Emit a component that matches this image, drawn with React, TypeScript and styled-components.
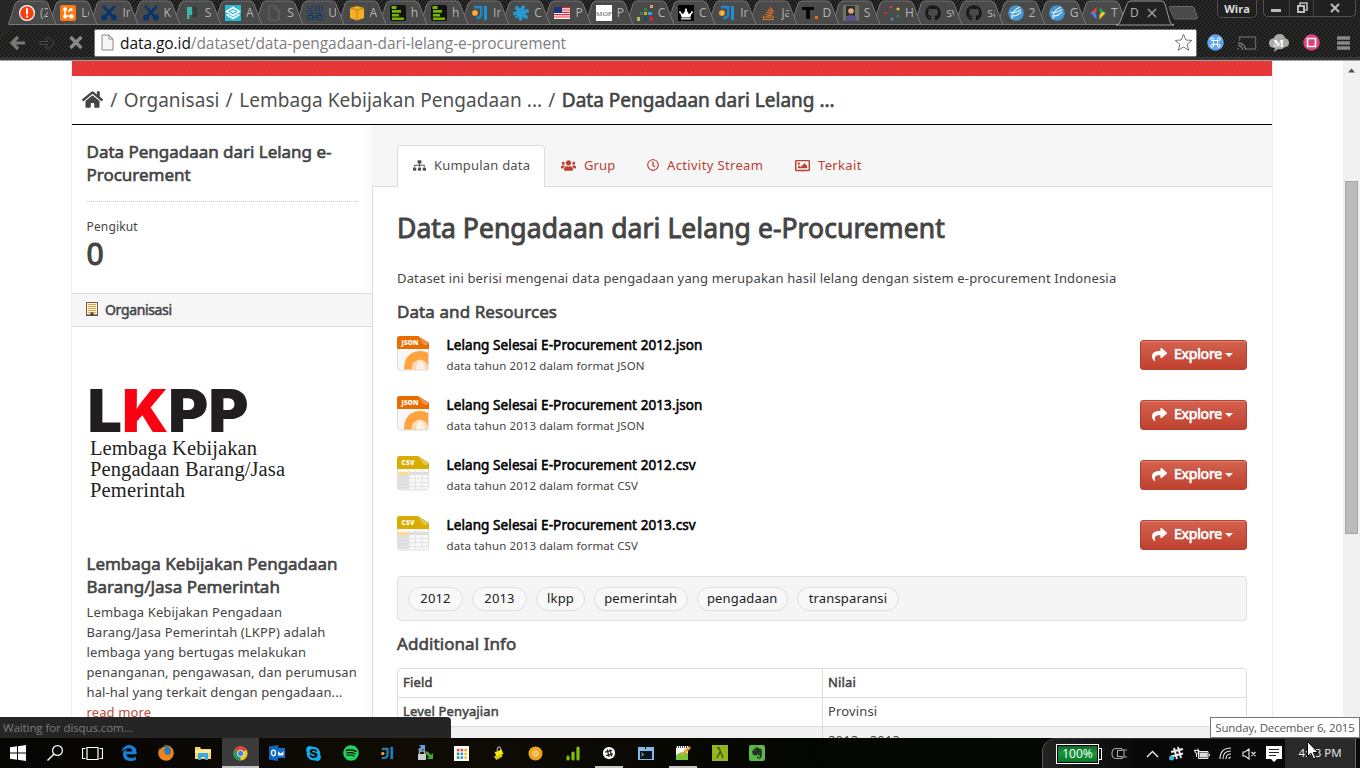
import React from "react";
import styled, { createGlobalStyle } from "styled-components";
import {
  FaHome, FaSitemap, FaUsers, FaRegClock, FaRegImage, FaShare, FaGithub, FaStackOverflow,
  FaFirefox, FaSkype, FaSpotify, FaEvernote, FaCrown,
} from "react-icons/fa";

const Global = createGlobalStyle`
  * { box-sizing: border-box; }
  body { margin: 0; overflow: hidden; background: #fff; font-family: "Noto Sans", sans-serif; color: #444; }
  h1, h2, h3, p { margin: 0; }
  svg { display: block; flex: none; }
`;

const Screen = styled.div`
  width: 1360px; height: 768px; display: flex; flex-direction: column; overflow: hidden; position: relative;
`;

/* ---------- browser frame ---------- */
const Chrome = styled.header`
  height: 61px; flex: none; display: flex; flex-direction: column; border-bottom: 1px solid #a2a2a2;
  background: repeating-linear-gradient(135deg, #191919 0 1.4px, #2b2b29 1.4px 2.83px);
`;
const TabStrip = styled.div`
  height: 25px; display: flex; padding-left: 8px; flex: none;
`;
const TabBox = styled.div<{ $last?: boolean; $z: number }>`
  width: ${p => (p.$last ? 55 : 41.19)}px; height: 25px; flex: none; position: relative; z-index: ${p => p.$z};
  display: flex; align-items: center; padding: 1px 0 0 ${p => (p.$last ? 10 : 11)}px; gap: 5px;
`;
const TabShape = styled.svg`
  position: absolute; left: 0; top: 0; overflow: visible;
`;
const Fav = styled.span`
  width: 16px; height: 16px; position: relative; flex: none; display: flex; align-items: center; justify-content: center;
`;
const TabText = styled.span<{ $wide?: boolean }>`
  position: relative; width: ${p => (p.$wide ? 10 : 8)}px; overflow: hidden; white-space: nowrap;
  font: 12px/18px "Open Sans", sans-serif; color: #b4b4b4;
`;
const CloseMark = styled.svg`
  position: relative; margin-left: 2px;
`;
const NewTab = styled.svg`
  margin: 5px 0 0 -8px; position: relative; z-index: 60;
`;
const WindowControls = styled.div`
  display: flex; margin-left: auto; gap: 6px; padding-right: 4px;
`;
const UserBadge = styled.span`
  width: 40px; height: 18px; border: 1px solid #505050; border-top: 0; border-radius: 0 0 5px 5px;
  font: 700 11px/18px "Open Sans", sans-serif; color: #ddd; text-align: center; background: #202020;
`;
const WindowButtons = styled.div`
  width: 93px; height: 17px; display: flex; border: 1px solid #505050; border-top: 0; border-radius: 0 0 5px 5px; background: #202020;
`;
const WindowButton = styled.span<{ $w: number; $drop?: number }>`
  width: ${p => p.$w}px; display: flex; align-items: center; justify-content: center; border-left: 1px solid #454545;
  padding-top: ${p => p.$drop ?? 0}px;
  &:first-child { border-left: 0; }
`;
const Toolbar = styled.div`
  height: 32px; margin-top: 3px; display: flex; align-items: center;
`;
const NavButtons = styled.div`
  width: 94px; display: flex; gap: 13px; padding-left: 9px; align-items: center;
`;
const Omnibox = styled.div`
  width: 1103px; height: 28px; background: #fff; border: 1px solid #777; border-radius: 2px; display: flex; align-items: center; padding: 0 3px 0 6px;
  font: 15.5px/26px "Open Sans", sans-serif; color: #7e7e7e; letter-spacing: -0.07px;
  b { font-weight: 400; color: #111; }
`;
const Url = styled.span`
  margin: 0 auto 0 6px;
`;
const Extensions = styled.div`
  display: flex; align-items: center; padding-left: 2px;
`;
const ExtensionSlot = styled.span`
  width: 32.1px; display: flex; justify-content: center;
`;
const ToolbarEdge = styled.div`
  height: 3px; margin-top: auto; background: #353535;
`;

const Glyph = ({ children, s = 16 }: { children: React.ReactNode; s?: number }) => (
  <svg width={s} height={s} viewBox="0 0 16 16">{children}</svg>
);
const Scissors = () => (
  <Glyph><g fill="none" stroke="#08356b" strokeWidth="2.8"><path d="M2 1q5 5 9 10M14 1Q9 6 5 11" /><circle cx="3.2" cy="12.5" r="1.7" /><circle cx="12.8" cy="12.5" r="1.7" /></g></Glyph>
);
const Bars = () => (
  <Glyph><rect width="16" height="16" rx="2" fill="#111" /><path fill="#79b800" d="M1.5 1h5v3h-5zM2 5h9v2.8H2zM2 9h7v2.6H2zM2 12.6h12V15H2z" /></Glyph>
);
const JI = () => (
  <Glyph><path d="M2 2.200h7.200V9q0 4-5 4" fill="none" stroke="#2086bd" strokeWidth="2.700" /><circle cx="3" cy="8" r="3" fill="#f49b20" /><circle cx="3" cy="8" r="1.200" fill="#ffd28a" /><path d="M12 1h3v14h-3z" fill="#1f8fd0" /></Glyph>
);
const Globe = () => (
  <Glyph><circle cx="8" cy="8" r="7.8" fill="#4597d0" /><path d="M2 7q5 2 11-2.500M5 11q4 0 8-4M4 14Q3 6 12 2" stroke="#d9effb" strokeWidth="1.300" fill="none" /></Glyph>
);
const Splat = () => (
  <Glyph><g fill="#269bd2"><circle cx="8" cy="8" r="5" /><circle cx="4" cy="3" r="2" /><circle cx="10" cy="2.300" r="2" /><circle cx="14" cy="6" r="2" /><circle cx="13" cy="12" r="2" /><circle cx="7.500" cy="13.800" r="1.900" /><circle cx="2" cy="8.500" r="1.900" /><circle cx="3.500" cy="12" r="1.300" /></g></Glyph>
);
const PageGlyph = ({ color }: { color: string }) => (
  <Glyph><path d="M3 .8h6l4 4v10.4H3zM9 1v4h4" fill="none" stroke={color} /></Glyph>
);

const tabs: { t: string; i: React.ReactNode }[] = [
  { t: "(2", i: <Glyph><circle cx="8" cy="8" r="7.4" fill="#f9400c" stroke="#fff" strokeWidth="1.2" /><path d="M7 3.2h2v6H7zM7 10.6h2v2H7z" fill="#fff" /></Glyph> },
  { t: "Lo", i: <Glyph><rect width="16" height="16" rx="2" fill="#ff7a12" /><path d="M5 4v7h7M9 5h3M9 5v2" fill="none" stroke="#fff" strokeWidth="1.6" /><g fill="#fff"><circle cx="5" cy="4.3" r="2" /><circle cx="5" cy="11.5" r="2" /><circle cx="11.5" cy="11.5" r="2.2" /><circle cx="11" cy="4.6" r="1.6" /></g></Glyph> },
  { t: "Ir", i: <Scissors /> },
  { t: "K", i: <Scissors /> },
  { t: "S", i: <Glyph><path d="M3 2h5v8H5.500v4H3z" fill="#3cb8a8" /><path d="M9 2h4v10H8v-2h2V5H9z" fill="#353b3b" /></Glyph> },
  { t: "A", i: <Glyph><rect width="16" height="16" fill="#2cb9d4" /><path d="M1.5 6.5L8 2.5l6.500 4L8 10.500zM1.500 9.500L8 13.500l6.500-4" fill="none" stroke="#fff" strokeWidth="1.700" /><path d="M5 6.500l3-1.500 3 1.500-3 1.500z" fill="#fff" /></Glyph> },
  { t: "S", i: <PageGlyph color="#666" /> },
  { t: "U", i: <Glyph><g fill="none" stroke="#0b3974" strokeWidth="1.200"><path d="M1 10.500h5v4H1zM10 10.500h5v4h-5zM6 12.500h4M3 8v2M13 8v2" /><path d="M0 1l6 6M6 1L0 7M8 3h8M8 5h8M8 1h8M3 8h10" strokeDasharray="2 1" /></g></Glyph> },
  { t: "A", i: <Glyph><path d="M1 3l7-2 7 2v10l-7 2.500L1 13z" fill="#f2ae24" /><path d="M1 3l7 2 7-2M8 5v10" stroke="#c37b0b" fill="none" /></Glyph> },
  { t: "h", i: <Bars /> },
  { t: "h", i: <Bars /> },
  { t: "Ir", i: <JI /> },
  { t: "C", i: <Splat /> },
  { t: "P", i: <Glyph><path fill="#fff" d="M0 2h16v12H0z" /><path d="M0 2.700h16M0 5h16M0 7.300h16M0 9.600h16M0 12h16" stroke="#e3243b" strokeWidth="1.200" /><path fill="#1f3479" d="M0 2h8v6H0z" /></Glyph> },
  { t: "P", i: <Glyph><path fill="#fff" d="M0 0h16v16H0z" /><text x="0" y="10.500" fontFamily="Liberation Serif" fontSize="7" textLength="16" fill="#555">MOF</text></Glyph> },
  { t: "C", i: <Glyph><path fill="#e0a083" d="M13 0h3v3h-3z" /><path fill="#29864b" d="M7 3h3v3H7zM3 7h3v3H3z" /><path fill="#f09a35" d="M7 7h3v3H7z" /><path fill="#27a3db" d="M11 7h4v3h-4z" /><path fill="#b6b75e" d="M0 12h3v4H0z" /><path fill="#0e4b82" d="M7 12h3v4H7z" /><path fill="#df2525" d="M13 12h3v4h-3z" /></Glyph> },
  { t: "C", i: <Glyph><path d="M0 0h16v16H0z" /><g transform="translate(1 2)"><FaCrown size={14} color="#fff" /></g></Glyph> },
  { t: "Ir", i: <JI /> },
  { t: "ja", i: <FaStackOverflow size={15} color="#e87922" /> },
  { t: "D", i: <Glyph><path d="M0 2h12v3H8v9H4V5H0z" fill="#080808" /><path d="M13 11h3v3h-3z" fill="#ff6a00" /></Glyph> },
  { t: "S", i: <Glyph><path d="M0 0h16v16H0z" fill="#6e7463" /><path d="M3 1h9v10H3z" fill="#352a24" /><circle cx="8" cy="6" r="2.800" fill="#dba88d" /><path d="M2 16q0-6 6-6t6 6" fill="#5c518c" /></Glyph> },
  { t: "H", i: <Glyph><g fill="#d84030"><circle cx="7" cy="2" r="1.300" /><circle cx="1.500" cy="8" r="1.300" /></g><circle cx="14" cy="4" r="1.600" fill="#f2c321" /><circle cx="8" cy="14" r="1.500" fill="#2697df" /><circle cx="14" cy="11" r="1.200" fill="#329b51" /><path d="M7 3l-5 5 6 5 6-8" fill="none" stroke="#6b4b4b" strokeDasharray="1 1" /></Glyph> },
  { t: "sv", i: <FaGithub size={16} color="#181818" /> },
  { t: "sa", i: <FaGithub size={16} color="#181818" /> },
  { t: "2", i: <Globe /> },
  { t: "G", i: <Globe /> },
  { t: "T", i: <Glyph><path d="M6.500 2v5L4 9 .5 8z" fill="#e84436" /><path d="M.5 8L4 7l2.500 3v4.500z" fill="#4385f5" /><path d="M9.500 2v5L12 9l3.500-1z" fill="#18a15f" /><path d="M15.500 8L12 7l-2.500 3v4.500z" fill="#ffca28" /></Glyph> },
];

const BrowserChrome = () => (
  <Chrome>
    <TabStrip>
      {tabs.map((tab, n) => (
        <TabBox key={n} $z={40 - n}>
          <TabShape width="49" height="25">
            <path d="M0.500 24.500L7 4q1.500-3 4-3h25q3 0 4 3l8 20.500z" fill="#4a4a4a" stroke="#777" />
          </TabShape>
          <Fav>{tab.i}</Fav>
          <TabText>{tab.t}</TabText>
        </TabBox>
      ))}
      <TabBox $last $z={50}>
        <TabShape width="55" height="26">
          <path d="M-4 25h1q2 0 3-3L7 4q1-3 4-3h30q3 0 4 3l5 18q1 3 4 3z" fill="#222" stroke="#9c9c9c" />
        </TabShape>
        <TabText $wide>D</TabText>
        <CloseMark width="10" height="10"><path d="M1 1l8 8M9 1L1 9" stroke="#999" strokeWidth="1.600" /></CloseMark>
      </TabBox>
      <NewTab width="32" height="16"><path d="M3 1.500h22q2 0 2.500 2l3 9.500q0 1-1 1H9q-2 0-2.500-1.500l-4-9q-.5-2 .5-2z" fill="#4a4a4a" stroke="#666" /></NewTab>
      <WindowControls>
        <UserBadge>Wira</UserBadge>
        <WindowButtons>
          <WindowButton $w={25} $drop={4}><svg width="10" height="3"><path d="M0 0h10v3H0z" fill="#bbb" /></svg></WindowButton>
          <WindowButton $w={25}><svg width="12" height="12"><path d="M4 3V1h7v7H9" fill="none" stroke="#bbb" strokeWidth="1.600" /><path d="M2 4h6v6H2z" fill="none" stroke="#bbb" strokeWidth="2" /></svg></WindowButton>
          <WindowButton $w={42}><svg width="10" height="10"><path d="M1 1l8 8M9 1L1 9" stroke="#bbb" strokeWidth="2" /></svg></WindowButton>
        </WindowButtons>
      </WindowControls>
    </TabStrip>
    <Toolbar>
      <NavButtons>
        <svg width="17" height="16"><path d="M16 8H3M9 2L3 8l6 6" fill="none" stroke="#777" strokeWidth="3.200" /></svg>
        <svg width="17" height="16"><path d="M1 6.500h8L6.500 4 9 1.500 15.500 8 9 14.500 6.500 12 9 9.500H1z" fill="none" stroke="#484848" /></svg>
        <svg width="15" height="15"><path d="M1.500 2l11 11M12.500 2l-11 11" stroke="#888" strokeWidth="3.300" /></svg>
      </NavButtons>
      <Omnibox>
        <svg width="13" height="17"><path d="M1 1h7l4 4v11H1zM8 1v4h4" fill="#f7f7f7" stroke="#888" /></svg>
        <Url><b>data.go.id</b>/dataset/data-pengadaan-dari-lelang-e-procurement</Url>
        <svg width="19" height="19" viewBox="0 0 19 19"><path d="M9.500 1.200l2.300 5.800 6.100.4-4.800 3.900 1.600 6-5.200-3.300-5.200 3.300 1.600-6L1.100 7.400l6.100-.4z" fill="none" stroke="#777" /></svg>
      </Omnibox>
      <Extensions>
        <ExtensionSlot><svg width="17" height="17"><circle cx="8.500" cy="8.500" r="8.300" fill="#5ba6ee" /><path d="M6.500 6.500h4v4h-4zM6.500 6.500h-1.500a1.400 1.400 0 1 1 1.500-1.500zM10.500 6.500V5A1.400 1.400 0 1 1 12 6.500zM10.500 10.500H12a1.400 1.400 0 1 1-1.500 1.500zM6.500 10.500V12A1.400 1.400 0 1 1 5 10.500z" fill="none" stroke="#fff" /></svg></ExtensionSlot>
        <ExtensionSlot><svg width="20" height="16"><path d="M2.500 6V2h16v12H9" fill="none" stroke="#5f5f5f" strokeWidth="1.400" /><path d="M1 14.500v-1.500M1 10.500q4 0 4.500 4.500M1 8q7 0 7.500 7" fill="none" stroke="#777" strokeWidth="1.300" /></svg></ExtensionSlot>
        <ExtensionSlot><svg width="20" height="18"><path d="M5 4q1-4 6-4 4 0 5 4 4 1 4 5 0 4-4 4-3 3-7 2l-4 3 1-4Q0 14 0 9q0-4 5-5z" fill="#aaa" /><text x="4.500" y="12.500" fontFamily="Liberation Serif" fontWeight="700" fontSize="11" fill="#fff">M</text></svg></ExtensionSlot>
        <ExtensionSlot><svg width="17" height="17"><circle cx="8.500" cy="8.500" r="8.300" fill="#d9447b" /><path d="M4.500 4.500h8v8h-8z" fill="none" stroke="#fff" strokeWidth="1.600" /></svg></ExtensionSlot>
        <ExtensionSlot><svg width="14" height="16"><path d="M1 3h13M1 8h13M1 13h13" stroke="#888" strokeWidth="3.600" /></svg></ExtensionSlot>
      </Extensions>
    </Toolbar>
    <ToolbarEdge />
  </Chrome>
);

/* ---------- page ---------- */
const Viewport = styled.div`
  height: 677px; flex: none; display: flex; overflow: hidden; background: #fff;
`;
const PageArea = styled.div`
  width: 1343px; padding-left: 71px;
`;
const Container = styled.div`
  width: 1202px; border: solid #eee; border-width: 0 1px;
`;
const RedBand = styled.div`
  height: 15px; background: repeating-linear-gradient(62deg, #e53535 0 3px, #e63838 3px 5px);
`;
const Crumbs = styled.nav`
  height: 49px; border-bottom: 1px solid #000; display: flex; align-items: center; padding: 0 0 1px 10px;
  font-size: 19px; color: #505050; white-space: pre; letter-spacing: 0.05px;
  b { font-weight: 400; -webkit-text-stroke: 0.6px #444; color: #444; letter-spacing: 0; }
`;
const Slash = styled.span<{ $first?: boolean }>`
  margin: 0 6.5px 0 ${p => (p.$first ? 7.2 : 6)}px;
`;
const Columns = styled.div`
  display: flex; height: 613px;
`;
const Sidebar = styled.aside`
  width: 300px; background: linear-gradient(to right, #fff 288px, #fafafa 300px);
`;
const SideBlock = styled.section`
  padding: 15px 14px 0 14.5px;
`;
const SideTitle = styled.h3`
  font-size: 17px; line-height: 23px; font-weight: 400; -webkit-text-stroke: 0.6px #444; letter-spacing: -0.02px; white-space: nowrap;
`;
const Follow = styled.div`
  margin-top: 15px; padding-top: 15px; border-top: 1px dotted #ccc; height: 92px; font-size: 12px; line-height: 20px; letter-spacing: 0.15px;
`;
const Count = styled.div`
  font-size: 30px; line-height: 32px; margin-top: 1px; font-weight: 400; -webkit-text-stroke: 1.1px #444;
`;
const SideHeading = styled.h2`
  height: 34px; border: solid #ddd; border-width: 1px 0; background: #f6f6f6; display: flex; align-items: center; gap: 7px;
  padding: 0 14px 2px; font-size: 14px; font-weight: 400; -webkit-text-stroke: 0.5px #444; letter-spacing: -0.35px;
`;
const Logo = styled.svg`
  margin: 45px 0 35px -0.5px;
`;
const OrgText = styled.p`
  margin-top: 4px; font-size: 13px; line-height: 20px; letter-spacing: 0.12px; white-space: nowrap;
  a { color: #c14b3c; }
`;
const Main = styled.main`
  width: 900px; display: flex; flex-direction: column;
`;
const PageHeader = styled.div`
  height: 62px; background: #f6f6f6; border-bottom: 1px solid #ddd; padding: 20px 0 0 25px; display: flex; flex: none;
`;
const NavTab = styled.div<{ $active?: boolean; $w: number; $ls: number }>`
  width: ${p => p.$w}px; height: ${p => (p.$active ? 42 : 41)}px; display: flex; align-items: center; gap: 8px; padding: 0 0 ${p => (p.$active ? 3 : 2)}px 15px; font-size: 13px;
  letter-spacing: ${p => p.$ls}px; white-space: nowrap; color: ${p => (p.$active ? "#505050" : "#bb4032")};
  border: 1px solid ${p => (p.$active ? "#ddd" : "transparent")}; border-bottom: 0; border-radius: 4px 4px 0 0;
  background: ${p => (p.$active ? "#fff" : "none")};
`;
const Content = styled.div`
  flex: 1; border-left: 1px solid #ddd; padding: 21px 25px 0 24px; display: flex; flex-direction: column;
`;
const Title = styled.h1`
  font-size: 26.5px; line-height: 40px; font-weight: 400; -webkit-text-stroke: 0.9px #444; letter-spacing: 0.06px;
`;
const Lead = styled.p`
  margin-top: 20px; font-size: 13px; line-height: 20px; letter-spacing: 0.16px; white-space: nowrap;
`;
const Heading = styled.h2<{ $top?: number }>`
  font-size: 17px; line-height: 24px; font-weight: 400; -webkit-text-stroke: 0.6px #444; margin: ${p => p.$top ?? 12}px 0 12px; letter-spacing: 0.08px;
`;
const Resource = styled.div`
  height: 60px; display: flex;
`;
const ResourceText = styled.div`
  margin-left: 16.5px; flex: 1;
`;
const ResourceName = styled.div`
  font-size: 13.5px; line-height: 20px; margin: -1px 0 1px; font-weight: 400; -webkit-text-stroke: 0.55px #000; color: #000; letter-spacing: 0.1px;
`;
const ResourceNote = styled.div`
  font-size: 11.5px; line-height: 20px; letter-spacing: 0.09px;
`;
const ExploreButton = styled.div`
  width: 107px; height: 30px; margin-top: 4px; border: 1px solid #b5402f; border-radius: 3px; box-shadow: inset 0 1px 0 #dd8175;
  background: linear-gradient(#d5614f, #bf422f); color: #fff; display: flex; align-items: center; padding: 0 0 2px 11px;
  font-size: 14px; line-height: 26px; -webkit-text-stroke: 0.7px #fff; text-shadow: 0 -1px 0 #9d3928;
`;
const ExploreText = styled.span`
  margin: 0 3px 0 7px; letter-spacing: -0.2px;
`;
const Caret = styled.span`
  border: 4px solid transparent; border-top-color: #fff; border-bottom: 0; margin-top: 2px;
`;
const Tags = styled.div`
  height: 45px; flex: none; background: #f5f5f5; border: 1px solid #e0e0e0; border-radius: 4px; padding: 10px; display: flex; gap: 9px;
`;
const Tag = styled.span<{ $w: number }>`
  width: ${p => p.$w}px; height: 24px; border: 1px solid #ddd; border-radius: 12px; background: #f8f8f8; text-align: center;
  font-size: 13px; line-height: 21px; color: #222; letter-spacing: 0.15px;
`;
const Table = styled.div`
  border: 1px solid #ddd; border-radius: 4px 4px 0 0; flex: none;
`;
const Row = styled.div<{ $odd?: boolean }>`
  height: 29px; display: grid; grid-template-columns: 424px 1fr; background: ${p => (p.$odd ? "#f1f1f1" : "transparent")};
  border-bottom: 1px solid #ddd;
`;
const Cell = styled.div<{ $bold?: boolean }>`
  padding-left: 5px; font-size: 13px; line-height: 27px; letter-spacing: 0.15px;
  ${p => p.$bold && "-webkit-text-stroke: 0.5px #444;"}
  & + & { border-left: 1px solid #ddd; }
`;
const ScrollTrack = styled.div`
  width: 17px; background: #f1f1f1; display: flex; flex-direction: column; align-items: center; padding-top: 7px;
`;
const ScrollThumb = styled.div`
  width: 13px; height: 353px; margin-top: 108px; background: #bbb; border: 1px solid #a6a6a6;
`;

const FileIcon = ({ kind }: { kind: "JSON" | "CSV" }) => {
  const json = kind === "JSON";
  return (
    <svg width="33" height="35" viewBox="0 0 33 35">
      <path d="M.5 12.500h31V31.500q0 2.500-2.500 2.500H3Q.5 34 .5 31.500z" fill="#f7f7f7" stroke="#dedede" />
      {json ? (
        <g>
          <path d="M7 33.500q0-17.500 16-18.500 5 0 8 2v16.500z" fill="#ffa33f" />
          <path d="M14.500 33.500q0-9 8.500-10 6 1 8 6v4z" fill="#fdd9b0" />
          <path d="M19 33.500q0-6 4-9.500 5 3 5 9.500z" fill="#fbf1e8" />
        </g>
      ) : (
        <g><path d="M1 16h31v3H1z" fill="#dedede" /><path d="M1 16h11v3H1z" fill="#ffdc8b" /><path d="M1 19h11v14H1z" fill="#dedede" /><path d="M1 22.500h30M1 26.500h30M1 30.500h30M12 14v19M18.500 14v19M25 14v19" stroke="#e4e4e4" fill="none" /></g>
      )}
      <path d="M0 13V2.500Q0 0 2.500 0H21l11 7v6z" fill={json ? "#e96c00" : "#d8ac00"} />
      <path d="M20 0q4 1 6 7 3 3 6 3V7z" fill={json ? "#c2570b" : "#b9982c"} /><path d="M21 0l11 7q-1 4-6 1z" fill={json ? "#ee914c" : "#dfc75c"} />
      <text x="4.500" y="9.300" fontFamily="Open Sans" fontWeight="800" fontSize="6.500" fill="#fff" textLength={json ? 17 : 13}>{kind}</text>
    </svg>
  );
};

const resources: { name: string; note: string; kind: "JSON" | "CSV" }[] = [
  { name: "Lelang Selesai E-Procurement 2012.json", note: "data tahun 2012 dalam format JSON", kind: "JSON" },
  { name: "Lelang Selesai E-Procurement 2013.json", note: "data tahun 2013 dalam format JSON", kind: "JSON" },
  { name: "Lelang Selesai E-Procurement 2012.csv", note: "data tahun 2012 dalam format CSV", kind: "CSV" },
  { name: "Lelang Selesai E-Procurement 2013.csv", note: "data tahun 2013 dalam format CSV", kind: "CSV" },
];
const tags: [string, number][] = [["2012", 55], ["2013", 55], ["lkpp", 49], ["pemerintah", 93.5], ["pengadaan", 91.5], ["transparansi", 102]];

const Page = () => (
  <Viewport>
    <PageArea>
      <Container>
        <RedBand />
        <Crumbs>
          <FaHome size={21} color="#444" /><Slash $first>/</Slash>Organisasi<Slash>/</Slash>Lembaga Kebijakan Pengadaan ...<Slash>/</Slash>
          <b>Data Pengadaan dari Lelang ...</b>
        </Crumbs>
        <Columns>
          <Sidebar>
            <SideBlock>
              <SideTitle>Data Pengadaan dari Lelang e-<br />Procurement</SideTitle>
              <Follow>Pengikut<Count>0</Count></Follow>
            </SideBlock>
            <SideHeading>
              <svg width="12" height="14"><path d="M.5.500h11v13H.5z" fill="#fff2d6" stroke="#765b3b" /><path d="M2 2.500h8M2 4.500h8M2 6.500h8M2 8.500h8M2 10.500h8" stroke="#d9a64d" /><path d="M0 13h12M5 11h2v2H5z" stroke="#444" /></svg>
              Organisasi
            </SideHeading>
            <SideBlock>
              <Logo width="210" height="130" viewBox="0 0 210 130">
                <text x="1.500" y="45" fontFamily="Inter" fontWeight="900" fontSize="59" fill="#221e20" textLength="161" lengthAdjust="spacingAndGlyphs">
                  L<tspan fill="#fa0214">K</tspan>PP
                </text>
                <g fontFamily="Liberation Serif" fontSize="20.500" fill="#222">
                  <text x="4" y="68" textLength="167">Lembaga Kebijakan</text>
                  <text x="4" y="89" textLength="195">Pengadaan Barang/Jasa</text>
                  <text x="4" y="110" textLength="95">Pemerintah</text>
                </g>
              </Logo>
              <SideTitle>Lembaga Kebijakan Pengadaan<br />Barang/Jasa Pemerintah</SideTitle>
              <OrgText>
                Lembaga Kebijakan Pengadaan<br />Barang/Jasa Pemerintah (LKPP) adalah<br />lembaga yang bertugas melakukan<br />
                penanganan, pengawasan, dan perumusan<br />hal-hal yang terkait dengan pengadaan...<br /><a>read more</a>
              </OrgText>
            </SideBlock>
          </Sidebar>
          <Main>
            <PageHeader>
              <NavTab $active $w={148} $ls={0.2}><FaSitemap size={13} />Kumpulan data</NavTab>
              <NavTab $w={86} $ls={0.1}><FaUsers size={15} />Grup</NavTab>
              <NavTab $w={148} $ls={0.35}><FaRegClock size={12} />Activity Stream</NavTab>
              <NavTab $w={100} $ls={0.35}><FaRegImage size={15} />Terkait</NavTab>
            </PageHeader>
            <Content>
              <Title>Data Pengadaan dari Lelang e-Procurement</Title>
              <Lead>Dataset ini berisi mengenai data pengadaan yang merupakan hasil lelang dengan sistem e-procurement Indonesia</Lead>
              <Heading>Data and Resources</Heading>
              {resources.map(r => (
                <Resource key={r.name}>
                  <FileIcon kind={r.kind} />
                  <ResourceText>
                    <ResourceName>{r.name}</ResourceName>
                    <ResourceNote>{r.note}</ResourceNote>
                  </ResourceText>
                  <ExploreButton><FaShare size={15} /><ExploreText>Explore</ExploreText><Caret /></ExploreButton>
                </Resource>
              ))}
              <Tags>{tags.map(([t, w]) => <Tag key={t} $w={w}>{t}</Tag>)}</Tags>
              <Heading $top={11}>Additional Info</Heading>
              <Table>
                <Row><Cell $bold>Field</Cell><Cell $bold>Nilai</Cell></Row>
                <Row><Cell $bold>Level Penyajian</Cell><Cell>Provinsi</Cell></Row>
                <Row $odd><Cell /><Cell>2012 - 2013</Cell></Row>
              </Table>
            </Content>
          </Main>
        </Columns>
      </Container>
    </PageArea>
    <ScrollTrack>
      <svg width="7" height="5"><path d="M0 4.500L3.500.5 7 4.500z" fill="#505050" /></svg>
      <ScrollThumb />
    </ScrollTrack>
  </Viewport>
);

/* ---------- overlays ---------- */
const StatusBubble = styled.div`
  position: absolute; left: 0; top: 717px; width: 451px; height: 21px; background: #252525; border-radius: 0 4px 0 0;
  font: 11.5px/22px "Open Sans", sans-serif; color: #7d7d7d; padding-left: 3px; letter-spacing: -0.1px;
`;
const DateTip = styled.div`
  position: absolute; left: 1210px; top: 717px; width: 150px; height: 21px; background: #fff; border: 1px solid #767676;
  font: 11.5px/19px "Open Sans", sans-serif; color: #575757; text-align: center; white-space: nowrap; letter-spacing: -0.15px;
`;
const Cursor = styled.svg`
  position: absolute; left: 1307px; top: 741px;
`;

/* ---------- taskbar ---------- */
const Taskbar = styled.footer`
  height: 30px; flex: none; background: linear-gradient(90deg, #050503, #100c05 30%, #040602 60%, #0b0c08); display: flex;
`;
const AppSlot = styled.div<{ $active?: boolean; $open?: boolean }>`
  width: 36.95px; height: 30px; display: flex; align-items: center; justify-content: center; flex: none;
  background: ${p => (p.$active ? "linear-gradient(#3b3b3b 28px, #c4c4c4 28px)" : p.$open ? "linear-gradient(#c4c4c4, #c4c4c4) center bottom / 28px 2px no-repeat" : "none")};
`;
const Tray = styled.div`
  margin-left: auto; width: 318px; display: flex; align-items: center; background: linear-gradient(90deg, #222, #080808 30%);
  border-left: 1px solid #555; border-top: 1px solid #333; border-radius: 14px 0 0 0; padding-left: 13px;
`;
const Battery = styled.div`
  width: 43px; height: 20px; border: 1px solid #fff; box-shadow: inset 0 0 0 1px #000; background: linear-gradient(#0e5f24, #15993d 45%, #087024);
  font: 12px/18px "Open Sans", sans-serif; color: #fff; text-align: center;
`;
const BatteryTip = styled.span`
  width: 3px; height: 12px; border: 1px solid #fff; border-left: 0;
`;
const TrayIcons = styled.div`
  display: flex; align-items: center; margin-left: 9px; width: 172px; justify-content: space-between;
  svg:first-child { margin-right: 8px; }
`;
const Clock = styled.div`
  margin-left: auto; margin-right: 4px; width: 71px; height: 30px; background: #292929; border-right: 1px solid #666;
  font: 11.5px/27px "Open Sans", sans-serif; color: #eee; text-align: center;
`;

const apps: { i: React.ReactNode; active?: boolean; open?: boolean }[] = [
  { i: <Glyph><path d="M0 2.300L7 1.300V7.500H0zM8 1.200L16 0v7.500H8zM0 8.500h7v6.200L0 13.700zM8 8.500h8V16l-8-1.200z" fill="#fff" /></Glyph> },
  { i: <Glyph><circle cx="10.500" cy="5.500" r="4.900" fill="none" stroke="#fff" strokeWidth="1.200" /><path d="M7 9L.5 15.500" stroke="#fff" strokeWidth="1.400" /></Glyph> },
  { i: <svg width="21" height="15"><path d="M5 1.500h11v12H5zM3.500 2.500h-3v10h3M17.500 2.500h3v10h-3" fill="none" stroke="#fff" strokeWidth="1.200" /></svg> },
  { i: <Glyph><path d="M15.600 9.300H5.200q.6 3.700 5 3.700 2.400 0 4.600-1.200V15q-2.300 1-5.300 1Q2 15.500 2 9.500 2 6 5.500 4 4.800 5.300 4.800 6.500h6.400q0-3.200-3.200-3.200Q3.500 3.300.5 7.500 1.500 0 8.500 0q7 .5 7.100 7.500z" fill="#1581df" /></Glyph> },
  { i: <Glyph><circle cx="8" cy="7.500" r="6.500" fill="#287bbd" /><g><FaFirefox size={16} color="#f18419" /></g></Glyph> },
  { i: <Glyph><path d="M0 2h5l1 2h10v10H0z" fill="#f8d66d" /><path d="M0 5h16v3H0z" fill="#ffe99c" /><path d="M3 15V8h10v7h-3v-3H6v3z" fill="#37a9df" /></Glyph> },
  { i: <Glyph s={15}><circle cx="8" cy="8" r="7.500" fill="#f0c630" /><path d="M8 8L1.500 4a7.500 7.500 0 0 1 13 0z" fill="#e24533" /><path d="M8 8l0 7.500A7.500 7.500 0 0 1 1.500 4z" fill="#24965a" /><circle cx="8" cy="8" r="3.500" fill="#4383d5" stroke="#eee" /></Glyph>, active: true },
  { i: <Glyph><path d="M7 3h9v10H7z" fill="#0c6fc4" /><path d="M8 5h7v6H8zM8 5l4 3 3-3" fill="#eee" stroke="#0c6fc4" /><path d="M0 1.500L9 0v16l-9-1.500z" fill="#096bc0" /><ellipse cx="4.500" cy="8" rx="2" ry="2.800" fill="none" stroke="#fff" strokeWidth="1.300" /></Glyph> },
  { i: <FaSkype size={17} color="#11afea" /> },
  { i: <FaSpotify size={16} color="#1ed35f" /> },
  { i: <Glyph s={15}><path d="M2 3h6v6q0 4-6 4" fill="none" stroke="#247eae" strokeWidth="2.500" /><circle cx="3" cy="8" r="1.800" fill="#ed9d33" /><path d="M11 1h3v13h-3z" fill="#1c7bb6" /></Glyph> },
  { i: <Glyph><path d="M1 9h8v6H1z" fill="#ccc" /><path d="M2.500 9V6h5v3" fill="none" stroke="#aaa" strokeWidth="1.500" /><path d="M2 0h6v6L6 4 3 6.500 1 4.500 4 2z" fill="#669ee4" /><path d="M16 14h-6l2-2-4-4 2-2 4 4 2-2z" fill="#42ac32" /></Glyph> },
  { i: <Glyph s={15}><path fill="#fff" d="M0 0h16v16H0z" />{["#e54336", "#e54336", "#f69b27", "#259d58", "#2794ee", "#f3c42c", "#259d58", "#2794ee", "#f3c42c"].map((c, n) => <rect key={n} x={3 + (n % 3) * 4} y={3 + Math.floor(n / 3) * 4} width="2.700" height="2.700" fill={c} />)}</Glyph> },
  { i: <Glyph s={14}><path d="M6 6V3q2-4 4 0v3" fill="none" stroke="#aaa" strokeWidth="1.300" /><path d="M3 7l8-3 2 5-8 3z" fill="#f5ed10" /><path d="M2 12l9-3 1 3-7 4z" fill="#ddc60c" /></Glyph> },
  { i: <Glyph s={15}><circle cx="8" cy="8" r="7.500" fill="#eda31e" /><circle cx="8" cy="8" r="3" fill="#f6b84b" stroke="#ffe1a3" /></Glyph> },
  { i: <Glyph><path d="M3 12v2M8 8v6M13 3v11" stroke="#7fc107" strokeWidth="3.200" strokeLinecap="round" /></Glyph> },
  { i: <Glyph s={14}><circle cx="8" cy="8" r="7" fill="#fff" /><path d="M6 4l2 8.500M9 3.500l2 8.500M3.500 7l8-2M4.500 11l8-2" stroke="#222" strokeWidth="1.400" /></Glyph>, open: true },
  { i: <Glyph><path d="M0 2h7v2h1V2h8v13H0z" fill="#84b9ea" /><path d="M2 6h12v8H2z" fill="#081420" /><path d="M3.500 8l2 1.500-2 1.500" stroke="#ddd" fill="none" /></Glyph> },
  { i: <Glyph><path d="M1 1h12v14H1z" fill="#fff" /><path d="M1 10q6-5 12-2v7H1z" fill="#78c63a" /><path d="M1 2h12" stroke="#555" strokeWidth="2" strokeDasharray="1 1" /><path d="M6 11l1-3 7-7 2 2-7 7z" fill="#e8a030" /></Glyph>, open: true },
  { i: <Glyph><path d="M0 0h16v16H0z" fill="#93b719" /><path d="M5 3h2l4 10M8 7l-3 6" stroke="#3f4918" fill="none" strokeWidth="1.300" /></Glyph> },
  { i: <Glyph><rect width="16" height="16" rx="2" fill="#58b947" /><g transform="translate(1.500 1.500)"><FaEvernote size={13} color="#252d25" /></g></Glyph> },
];

export default function App() {
  return (
    <Screen>
      <Global />
      <BrowserChrome />
      <Page />
      <Taskbar>
        {apps.map((a, n) => <AppSlot key={n} $active={a.active} $open={a.open}>{a.i}</AppSlot>)}
        <Tray>
          <Battery>100%</Battery><BatteryTip />
          <TrayIcons>
            <svg width="18" height="13"><path d="M11 1.500H5Q1 1.500 1 6.500t4 5h6V10h5M11 1.500V3h5M11 3.500H6.500v6H11M13 3v7" fill="none" stroke="#aaa" strokeWidth="1.100" /></svg>
            <svg width="13" height="8"><path d="M1 7l5.500-5.500L12 7" fill="none" stroke="#eee" strokeWidth="1.400" /></svg>
            <svg width="15" height="15"><path d="M5 2l3 11M9 1l3 11M2 6l12-3M2 10.500l12-3" stroke="#eee" strokeWidth="2" /><circle cx="2.500" cy="12" r="2.500" fill="#43b8dd" /></svg>
            <svg width="17" height="12"><path d="M6.500 4.500h8v5h-8z" fill="#ddd" /><path d="M5.500 3.500h9.500v7H5.500zM16.500 6v2M1 2.500h5v2q-2 2-4 0v-3M5 .5v3M3.500 6v3" fill="none" stroke="#eee" /></svg>
            <svg width="13" height="13"><path d="M1 12Q1 1 12 1M4 12q0-8 8-8M7 12q0-5 5-5M10 12q0-2 2-2" fill="none" stroke="#ddd" strokeWidth="1.200" /></svg>
            <svg width="15" height="12"><path d="M1 4h2l4-3v10L3 8H1zM9.500 4l4 4M13.500 4l-4 4" fill="none" stroke="#eee" strokeWidth="1.100" /></svg>
            <svg width="17" height="16"><path d="M0 0h16v13h-5l-3 3-3-3H0z" fill="#fff" /><path d="M3 3.500h10M3 6.500h10M3 9.500h7" stroke="#222" /></svg>
          </TrayIcons>
          <Clock>4:43 PM</Clock>
        </Tray>
      </Taskbar>
      <StatusBubble>Waiting for disqus.com...</StatusBubble>
      <DateTip>Sunday, December 6, 2015</DateTip>
      <Cursor width="12" height="19"><path d="M.5.500v15l3.500-3.300 2.500 5.700 2.300-1-2.500-5.400H11z" fill="#fff" stroke="#000" /></Cursor>
    </Screen>
  );
}
